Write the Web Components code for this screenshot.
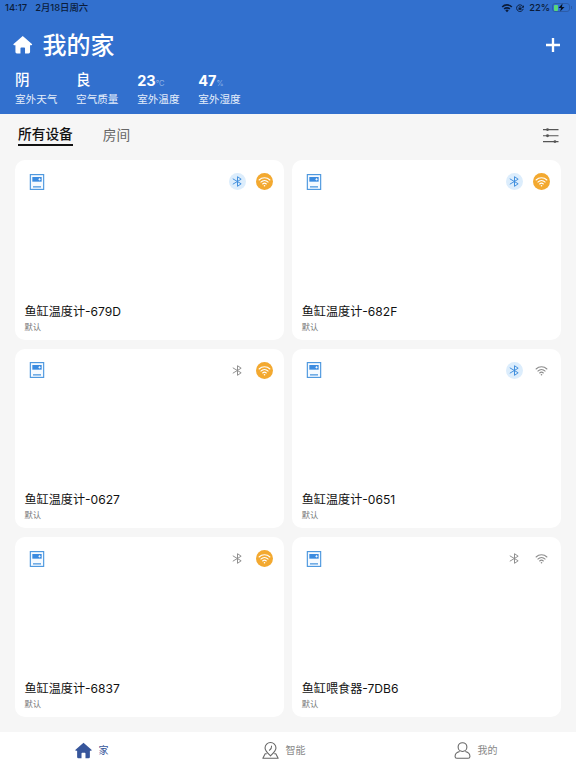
<!DOCTYPE html>
<html lang="zh-CN">
<head>
<meta charset="utf-8">
<title>我的家</title>
<style>
  body {
    margin: 0;
    background: #f6f6f6;
    font-family: Inter, "Noto Sans CJK SC", sans-serif;
  }
</style>
</head>
<body>
<home-app></home-app>

<script>
const ICONS = {
  house: `<path d="M12 1.2 23.3 11q.9 1.3-.6 1.5H21V21q0 1.8-1.8 1.8h-4.4v-6.5q0-1-1-1h-3.6q-1 0-1 1v6.500H4.800Q3 22.800 3 21v-8.500H1.300Q-.2 12.300 .7 11z" fill="currentColor"/>`,
  plus: `<path d="M12 0v24M0 12h24" stroke="currentColor" stroke-width="4" fill="none"/>`,
  wifi: `<g fill="none" stroke="currentColor" stroke-width="2" stroke-linecap="round"><path d="M2 9.200a14.500 14.500 0 0 1 20 0M5.300 13a9.700 9.700 0 0 1 13.400 0M8.600 16.600a5 5 0 0 1 6.800 0"/></g><circle cx="12" cy="19.800" r="1.500" fill="currentColor"/>`,
  wifiSolid: `<g fill="none" stroke="currentColor" stroke-width="4"><path d="M.5 9.500a16 16 0 0 1 23 0M5.200 14.500a9.500 9.500 0 0 1 13.600 0"/></g><path d="M12 22 8 17.800a5.700 5.700 0 0 1 8 0z" fill="currentColor"/>`,
  bluetooth: `<path d="M2.500 6.500 20 17 12 22.500v-21L20 7 2.500 17.500" fill="none" stroke="currentColor" stroke-width="2.100" stroke-linejoin="round" stroke-linecap="round"/>`,
  lock: `<path d="M21 8.500a10 10 0 1 0 .6 6M22.500 5v5h-5" fill="none" stroke="currentColor" stroke-width="2.800"/><path d="M7.500 11h9v6.500h-9z" fill="currentColor"/><path d="M9.500 11V9a2.500 2.500 0 0 1 5 0v2" fill="none" stroke="currentColor" stroke-width="1.800"/>`,
  filter: `<path d="M0 2.500h24M0 12h24M0 21h24" stroke="currentColor" stroke-width="1.900"/><g fill="currentColor"><circle cx="7" cy="2.500" r="2.200"/><circle cx="7" cy="12" r="2.200"/><circle cx="18.500" cy="21" r="2.200"/></g>`,
  device: `<rect x="2" y=".9" width="20" height="22.200" fill="#f5faff" stroke="#4a96de" stroke-width="1.700"/><rect x="5" y="4.500" width="14" height="7" fill="#3b8be0"/><path d="M14 8h3.600M15.800 6.300v3.400" stroke="#fff" stroke-width="1.200"/><path d="M6 19.300h12" stroke="#4a96de" stroke-width="1.900"/>`,
  place: `<g fill="none" stroke="currentColor" stroke-width="1.500" stroke-linejoin="round" stroke-linecap="round"><path d="M12 19.500C8.500 16 4.300 12.500 4.300 8.400a7.700 7.700 0 0 1 15.400 0c0 4.100-4.200 7.600-7.700 11.100z"/><path d="M6.200 16.500H4.500L1.200 23h21.600l-3.300-6.500h-1.700M13.500 5.800c.2 2.800-.8 4.500-3 5.800"/></g>`,
  person: `<g fill="none" stroke="currentColor" stroke-width="1.500"><circle cx="12" cy="7.200" r="6.200"/><path d="M8 13.500c-4 .9-6.500 3.500-6.500 7 0 1.700.8 2.500 2.500 2.500h16c1.700 0 2.500-.8 2.500-2.500 0-3.500-2.500-6.100-6.500-7"/></g>`,
};

const DEVICES = [
  { name: '鱼缸温度计-679D', bt: true, wifi: true },
  { name: '鱼缸温度计-682F', bt: true, wifi: true },
  { name: '鱼缸温度计-0627', bt: false, wifi: true },
  { name: '鱼缸温度计-0651', bt: true, wifi: false },
  { name: '鱼缸温度计-6837', bt: false, wifi: true },
  { name: '鱼缸喂食器-7DB6', bt: false, wifi: false },
];

class UiIcon extends HTMLElement {
  connectedCallback() {
    const size = this.getAttribute('size') || '16';
    this.attachShadow({ mode: 'open' }).innerHTML = `
      <style>
        :host { display: block; flex: none; width: ${size}px; height: ${size}px; }
        svg { display: block; width: 100%; height: 100%; overflow: visible; }
      </style>
      <svg viewBox="0 0 24 24">${ICONS[this.getAttribute('name')]}</svg>
    `;
  }
}

class StatusBar extends HTMLElement {
  connectedCallback() {
    this.attachShadow({ mode: 'open' }).innerHTML = `
      <style>
        :host {
          display: flex;
          align-items: center;
          height: 15px;
          padding: 0 4px 0 5px;
          color: #0b1c3a;
          font-size: 9.400px;
          font-weight: 500;
          line-height: 15px;
          white-space: nowrap;
        }
        .date { margin-left: 8px; }
        .right { display: flex; align-items: center; margin-left: auto; }
        .lock { margin: 0 5px 0 4px; }
        .battery {
          box-sizing: border-box;
          display: flex;
          align-items: center;
          width: 18px;
          height: 9px;
          margin-left: 2px;
          padding: 0 1px;
          border: 1px solid #2c5ca8;
          border-radius: 3px;
        }
        .level { width: 4px; height: 6px; border-radius: 1px; background: #58d77b; }
        .bolt { display: block; width: 7px; height: 9px; overflow: visible; }
        .cap { width: 1px; height: 3px; margin-left: 1px; background: #2c5ca8; }
      </style>
      <span>14:17</span><span class="date">2月18日周六</span>
      <div class="right">
        <ui-icon name="wifiSolid" size="10"></ui-icon>
        <ui-icon class="lock" name="lock" size="8"></ui-icon>
        <span>22%</span>
        <div class="battery">
          <div class="level"></div>
          <svg class="bolt" viewBox="0 0 8 9"><path d="M5.200 0 .5 5h3L2.500 9l5-5.200h-3z" fill="#071223"/></svg>
        </div>
        <div class="cap"></div>
      </div>
    `;
  }
}

class WeatherStat extends HTMLElement {
  connectedCallback() {
    this.attachShadow({ mode: 'open' }).innerHTML = `
      <style>
        :host { display: block; width: 61.100px; color: #fff; white-space: nowrap; }
        .value { height: 20px; font-size: 14.500px; font-weight: 500; line-height: 20px; }
        :host([unit]) .value { line-height: 22px; font-weight: 700; }
        small { font-size: 7.500px; font-weight: 300; color: #a8c4ec; }
        .label { height: 18px; margin-top: 1px; font-size: 10.600px; line-height: 18px; color: #e4edfa; }
      </style>
      <div class="value"><slot></slot><small>${this.getAttribute('unit') || ''}</small></div>
      <div class="label">${this.getAttribute('label')}</div>
    `;
  }
}

class HomeHeader extends HTMLElement {
  connectedCallback() {
    this.attachShadow({ mode: 'open' }).innerHTML = `
      <style>
        :host { display: block; height: 114px; background: #3270ce; color: #fff; }
        .title { display: flex; align-items: center; height: 36px; padding: 12px 16px 0 13px; }
        h1 { flex: 1; margin: 2px 0 0 10px; font-size: 24px; font-weight: 500; line-height: 36px; }
        .stats { display: flex; padding: 6.500px 0 0 15px; }
      </style>
      <status-bar></status-bar>
      <div class="title">
        <ui-icon name="house" size="19.500"></ui-icon>
        <h1>我的家</h1>
        <ui-icon name="plus" size="14"></ui-icon>
      </div>
      <div class="stats">
        <weather-stat label="室外天气">阴</weather-stat>
        <weather-stat label="空气质量">良</weather-stat>
        <weather-stat label="室外温度" unit="°C">23</weather-stat>
        <weather-stat label="室外湿度" unit="%">47</weather-stat>
      </div>
    `;
  }
}

class RoomTabs extends HTMLElement {
  connectedCallback() {
    this.attachShadow({ mode: 'open' }).innerHTML = `
      <style>
        :host {
          display: flex;
          box-sizing: border-box;
          height: 46px;
          padding: 11px 17.500px 0 18px;
          font-size: 13.700px;
          line-height: 20px;
          color: #666;
        }
        .active {
          box-sizing: border-box;
          height: 21px;
          margin-right: 30px;
          border-bottom: 2px solid #111;
          color: #111;
          font-weight: 500;
          line-height: 19px;
        }
        ui-icon { margin: 3px 0 0 auto; color: #555; }
      </style>
      <span class="active">所有设备</span>
      <span>房间</span>
      <ui-icon name="filter" size="15.500"></ui-icon>
    `;
  }
}

class DeviceCard extends HTMLElement {
  connectedCallback() {
    this.attachShadow({ mode: 'open' }).innerHTML = `
      <style>
        :host {
          display: flex;
          flex-direction: column;
          box-sizing: border-box;
          padding: 13px 11px 7px 9.500px;
          border-radius: 10px;
          background: #fff;
        }
        .top { display: flex; align-items: center; height: 17px; padding-left: 4px; }
        .badge {
          display: flex;
          align-items: center;
          justify-content: center;
          width: 17px;
          height: 17px;
          margin-left: 10px;
          border-radius: 50%;
          color: #8c8c8c;
        }
        .bt { margin-left: auto; }
        :host([bt]) .bt { background: #dcedfc; color: #3d8cdd; }
        :host([wifi]) .wifi { background: #f3a930; color: #fff; }
        .name { margin-top: auto; font-size: 12.100px; line-height: 18px; color: #111; }
        .room { font-size: 8.300px; line-height: 12px; color: #777; }
      </style>
      <div class="top">
        <ui-icon name="device" size="16"></ui-icon>
        <div class="badge bt"><ui-icon name="bluetooth" size="11"></ui-icon></div>
        <div class="badge wifi"><ui-icon name="wifi" size="13"></ui-icon></div>
      </div>
      <div class="name"><slot></slot></div>
      <div class="room">默认</div>
    `;
  }
}

class TabBar extends HTMLElement {
  connectedCallback() {
    this.attachShadow({ mode: 'open' }).innerHTML = `
      <style>
        :host {
          display: grid;
          grid-template-columns: repeat(3, 1fr);
          box-sizing: border-box;
          height: 36px;
          padding-top: 1px;
          background: #fff;
          font-size: 10px;
          color: #888;
        }
        .tab { display: flex; align-items: center; justify-content: center; gap: 7px; padding-right: 9px; }
        .tab ui-icon { color: #666; }
        .tab span { margin-top: -2px; }
        .tab.active, .tab.active ui-icon { color: #37569b; }
      </style>
      <div class="tab active"><ui-icon name="house" size="17"></ui-icon><span>家</span></div>
      <div class="tab"><ui-icon name="place" size="17"></ui-icon><span>智能</span></div>
      <div class="tab"><ui-icon name="person" size="17"></ui-icon><span>我的</span></div>
    `;
  }
}

class HomeApp extends HTMLElement {
  connectedCallback() {
    const cards = DEVICES.map((d) =>
      `<device-card ${d.bt ? 'bt' : ''} ${d.wifi ? 'wifi' : ''}>${d.name}</device-card>`
    ).join('');

    this.attachShadow({ mode: 'open' }).innerHTML = `
      <style>
        :host { display: flex; flex-direction: column; height: 768px; overflow: hidden; }
        .grid {
          flex: 1;
          display: grid;
          grid-template-columns: 1fr 1fr;
          grid-auto-rows: 1fr;
          gap: 9px 8.500px;
          padding: 0 15px 15px;
        }
      </style>
      <home-header></home-header>
      <room-tabs></room-tabs>
      <div class="grid">${cards}</div>
      <tab-bar></tab-bar>
    `;
  }
}

customElements.define('ui-icon', UiIcon);
customElements.define('status-bar', StatusBar);
customElements.define('weather-stat', WeatherStat);
customElements.define('home-header', HomeHeader);
customElements.define('room-tabs', RoomTabs);
customElements.define('device-card', DeviceCard);
customElements.define('tab-bar', TabBar);
customElements.define('home-app', HomeApp);
</script>
</body>
</html>
